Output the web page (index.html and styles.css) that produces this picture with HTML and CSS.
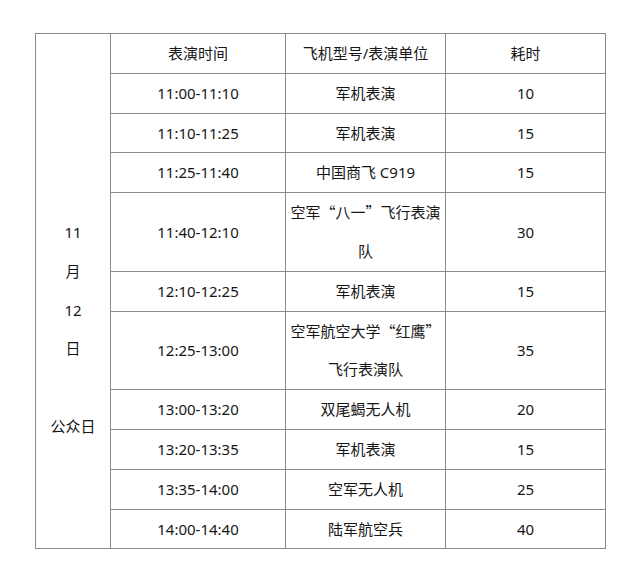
FILE: index.html
```html
<!DOCTYPE html>
<html lang="zh-CN">
<head>
<meta charset="utf-8">
<title>公众日飞行表演安排</title>
<link rel="stylesheet" href="styles.css">
</head>
<body>
<table class="schedule">
  <colgroup>
    <col class="c-day">
    <col class="c-time">
    <col class="c-unit">
    <col class="c-dur">
  </colgroup>
  <tbody>
    <tr>
      <td class="day" rowspan="12">11<br>月<br>12<br>日<br>&nbsp;<br>公众日</td>
      <td>表演时间</td>
      <td class="unit">飞机型号/表演单位</td>
      <td>耗时</td>
    </tr>
    <tr><td>11:00-11:10</td><td class="unit">军机表演</td><td>10</td></tr>
    <tr><td>11:10-11:25</td><td class="unit">军机表演</td><td>15</td></tr>
    <tr><td>11:25-11:40</td><td class="unit">中国商飞 C919</td><td>15</td></tr>
    <tr><td>11:40-12:10</td><td class="unit">空军<span class="q">“</span>八一<span class="q">”</span>飞行表演<br>队</td><td>30</td></tr>
    <tr><td>12:10-12:25</td><td class="unit">军机表演</td><td>15</td></tr>
    <tr><td>12:25-13:00</td><td class="unit">空军航空大学<span class="q">“</span>红鹰<span class="q">”</span><br>飞行表演队</td><td>35</td></tr>
    <tr><td>13:00-13:20</td><td class="unit">双尾蝎无人机</td><td>20</td></tr>
    <tr><td>13:20-13:35</td><td class="unit">军机表演</td><td>15</td></tr>
    <tr><td>13:35-14:00</td><td class="unit">空军无人机</td><td>25</td></tr>
    <tr><td>14:00-14:40</td><td class="unit">陆军航空兵</td><td>40</td></tr>
  </tbody>
</table>
</body>
</html>
```
FILE: styles.css
```css
html, body {
  margin: 0;
  padding: 0;
  background: #ffffff;
}
body {
  padding: 33px 0 0 35px;
  font-family: "Noto Sans", "Noto Sans CJK SC", sans-serif;
  font-size: 15px;
  color: #161616;
}
.schedule {
  border-collapse: collapse;
  table-layout: fixed;
  width: 570px;
}
.c-day { width: 75px; }
.c-time { width: 175px; }
.c-unit { width: 160px; }
.c-dur { width: 160px; }
.schedule td {
  border: 1px solid #8a8a8a;
  padding: 0;
  text-align: center;
  vertical-align: middle;
  line-height: 38.8px;
  white-space: nowrap;
}
.schedule td.unit {
  border-left-color: #c4c4c4;
}
.schedule td.day {
  vertical-align: top;
  padding-top: 179px;
}
.q {
  font-family: "Noto Sans CJK SC", sans-serif;
}
```
